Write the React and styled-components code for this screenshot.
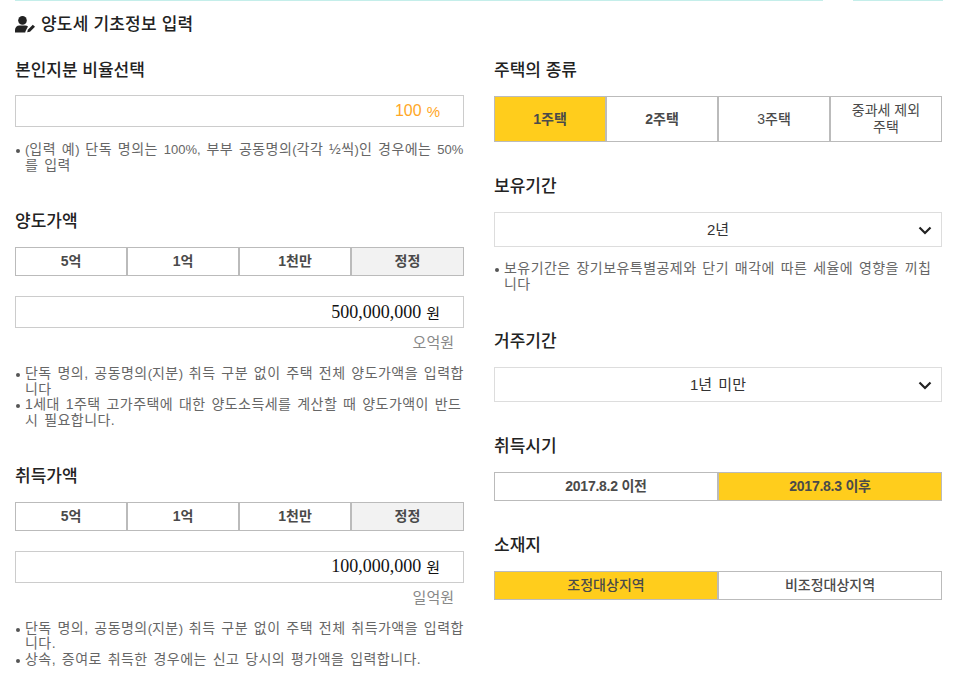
import React from "react";
import styled, { createGlobalStyle } from "styled-components";

const Global = createGlobalStyle`
  html, body { margin: 0; padding: 0; background: #fff; }
  body { font-family: "Liberation Sans", "Noto Sans CJK KR", sans-serif; color: #222; }
`;
const Page = styled.div`width: 958px; height: 693px; overflow: hidden; position: relative;`;
const TopLine = styled.div`
  height: 1px; margin-left: 15px; margin-bottom: 1px; width: 928px;
  background: linear-gradient(to right, #c4eeea 0, #c4eeea 808px, #fff 808px, #fff 838px, #c4eeea 838px);
`;
const Title = styled.h2`
  display: flex; align-items: center; gap: 5px; margin: 0; padding: 13px 0 0 15px; height: 19px;
  font-size: 17px; line-height: 20px; font-weight: 500; color: #222; letter-spacing: 0.2px;
`;
const Columns = styled.div`display: grid; grid-template-columns: 449px 448px; column-gap: 30px; padding-left: 15px; margin-top: 26px;`;
const Column = styled.div`display: flex; flex-direction: column;`;
const Section = styled.section`margin-bottom: ${p => p.$mb ?? 0}px;`;
const Heading = styled.h3`margin: 0 0 15px; padding-top: 1px; font-size: 17px; line-height: 20px; font-weight: 500; color: #222;`;
const ButtonRow = styled.div`
  display: grid; grid-template-columns: ${p => p.$cols === 4 ? "repeat(3, 112px) 1fr" : "1fr 1fr"}; height: ${p => p.$h}px;
`;
const Choice = styled.button`
  padding: 0; margin: 0; border: 1px solid #bbb; box-sizing: border-box; font: inherit; font-size: 14px; line-height: 17px;
  font-weight: ${p => p.$weight ?? 700}; color: #4a4a4a; letter-spacing: ${p => p.$tight ? "-0.25px" : "0"};
  background: ${p => p.$on ? "#ffcd1c" : p.$gray ? "#f2f2f2" : "#fff"};
`;
const AmountBox = styled.div`
  height: 32px; box-sizing: border-box; border: 1px solid #ccc; margin-top: ${p => p.$mt ?? 0}px;
  display: flex; align-items: center; justify-content: flex-end; padding-right: 23px;
  font-family: ${p => p.$accent ? '"Liberation Sans"' : '"Liberation Serif"'}, "Noto Sans CJK KR", sans-serif;
  font-size: ${p => p.$accent ? 16 : 18}px; color: ${p => p.$accent ? "#ffa726" : "#111"};
`;
const Unit = styled.span`margin-left: 5px; font-family: "Liberation Sans", "Noto Sans CJK KR", sans-serif; font-size: 15px;`;
const Helper = styled.div`text-align: right; font-size: 15px; line-height: 18px; color: #888; padding: 6px 10px 0 0;`;
const Notes = styled.ul`margin: ${p => p.$mt ?? 14}px 0 0; padding: 0; list-style: none;`;
const Note = styled.li`
  position: relative; padding-left: 10px; font-size: 14px; line-height: 15.6px; color: #666;
  letter-spacing: 0.45px; word-spacing: 1.5px; word-break: break-all;
  &::before { content: ""; position: absolute; left: 1px; top: 7px; width: 4px; height: 4px; border-radius: 50%; background: #555; }
`;
const Narrow = styled.span`font-size: 13px; letter-spacing: 0;`;
const SelectBox = styled.div`
  height: 35px; box-sizing: border-box; border: 1px solid #ddd; position: relative; padding-bottom: 2px;
  display: flex; align-items: center; justify-content: center; font-size: 15px; word-spacing: 2px; color: #333;
`;
const Chevron = styled.svg`position: absolute; right: 9px; top: 13px; width: 14px; height: 9px;`;

const Select = ({ children }) => (
  <SelectBox>{children}
    <Chevron viewBox="0 0 14 9"><path d="M1.5 1.5 7 7l5.5-5.5" fill="none" stroke="#222" strokeWidth="2.2" /></Chevron>
  </SelectBox>
);

const Amounts = () => (
  <ButtonRow $cols={4} $h={29}>
    <Choice>5억</Choice><Choice>1억</Choice><Choice>1천만</Choice><Choice $gray>정정</Choice>
  </ButtonRow>
);

const UserEdit = () => (
  <svg width="21" height="17" viewBox="0 0 21 17">
    <circle cx="7.5" cy="4.4" r="4.3" fill="#222" />
    <path d="M0 16.5v-2.4C0 11.4 2 9.6 4.4 9.6h6c1 0 1.9.3 2.6.8L10.6 15l-.4 1.5z" fill="#222" />
    <path d="M12.2 16.3l.6-2.6 5-5 2.2 2.1-5 5z" fill="#222" />
  </svg>
);

export default function App() {
  return (
    <Page>
      <Global />
      <TopLine />
      <Title><UserEdit />양도세 기초정보 입력</Title>
      <Columns>
        <Column>
          <Section $mb={38}>
            <Heading>본인지분 비율선택</Heading>
            <AmountBox $accent $mt={-1}>100<Unit>%</Unit></AmountBox>
            <Notes $mt={15}>
              <Note><Narrow>(</Narrow>입력 예<Narrow>)</Narrow> 단독 명의는 <Narrow>100%,</Narrow> 부부 공동명의<Narrow>(</Narrow>각각 ½씩<Narrow>)</Narrow>인 경우에는 <Narrow>50%</Narrow>를 입력</Note>
            </Notes>
          </Section>
          <Section $mb={37}>
            <Heading>양도가액</Heading>
            <Amounts />
            <AmountBox $mt={20}>500,000,000<Unit>원</Unit></AmountBox>
            <Helper>오억원</Helper>
            <Notes>
              <Note>단독 명의, 공동명의<Narrow>(</Narrow>지분<Narrow>)</Narrow> 취득 구분 없이 주택 전체 양도가액을 입력합니다</Note>
              <Note>1세대 1주택 고가주택에 대한 양도소득세를 계산할 때 양도가액이 반드시 필요합니다.</Note>
            </Notes>
          </Section>
          <Section>
            <Heading>취득가액</Heading>
            <Amounts />
            <AmountBox $mt={20}>100,000,000<Unit>원</Unit></AmountBox>
            <Helper>일억원</Helper>
            <Notes>
              <Note>단독 명의, 공동명의<Narrow>(</Narrow>지분<Narrow>)</Narrow> 취득 구분 없이 주택 전체 취득가액을 입력합니다.</Note>
              <Note>상속, 증여로 취득한 경우에는 신고 당시의 평가액을 입력합니다.</Note>
            </Notes>
          </Section>
        </Column>
        <Column>
          <Section $mb={34}>
            <Heading>주택의 종류</Heading>
            <ButtonRow $cols={4} $h={46}>
              <Choice $on>1주택</Choice><Choice>2주택</Choice><Choice $weight={500}>3주택</Choice>
              <Choice $weight={400}>중과세 제외<br />주택</Choice>
            </ButtonRow>
          </Section>
          <Section $mb={39}>
            <Heading>보유기간</Heading>
            <Select>2년</Select>
            <Notes>
              <Note>보유기간은 장기보유특별공제와 단기 매각에 따른 세율에 영향을 끼칩니다</Note>
            </Notes>
          </Section>
          <Section $mb={34}>
            <Heading>거주기간</Heading>
            <Select>1년 미만</Select>
          </Section>
          <Section $mb={34}>
            <Heading>취득시기</Heading>
            <ButtonRow $cols={2} $h={29}>
              <Choice $tight>2017.8.2 이전</Choice><Choice $tight $on>2017.8.3 이후</Choice>
            </ButtonRow>
          </Section>
          <Section>
            <Heading>소재지</Heading>
            <ButtonRow $cols={2} $h={29}>
              <Choice $on $weight={500}>조정대상지역</Choice><Choice $weight={500}>비조정대상지역</Choice>
            </ButtonRow>
          </Section>
        </Column>
      </Columns>
    </Page>
  );
}
